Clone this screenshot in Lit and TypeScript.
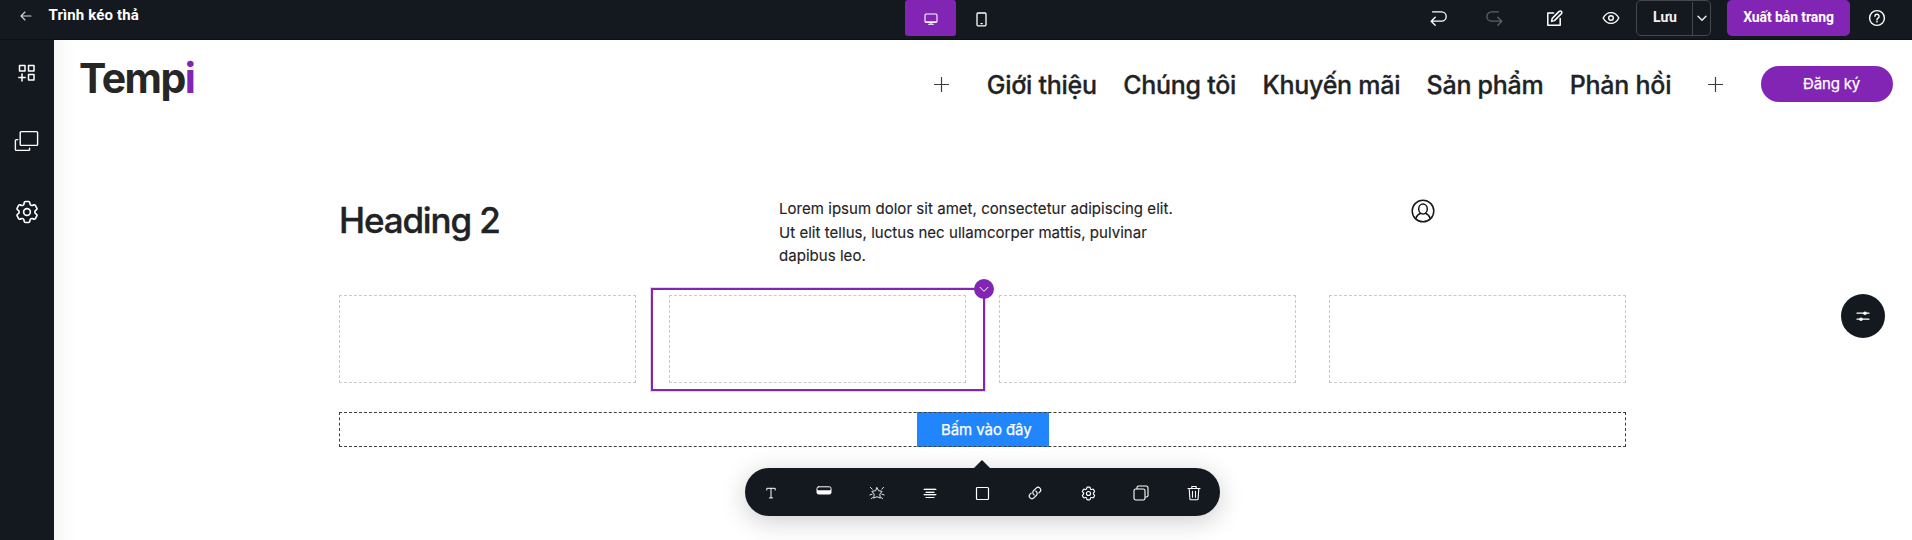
import { LitElement, html, css, svg } from "lit";
import { customElement, property } from "lit/decorators.js";

const gearPath =
  "M9.594 3.94c.09-.542.56-.94 1.11-.94h2.593c.55 0 1.02.398 1.11.94l.213 1.281c.063.374.313.686.645.87.074.04.147.083.22.127.325.196.72.257 1.075.124l1.217-.456a1.125 1.125 0 0 1 1.37.49l1.296 2.247a1.125 1.125 0 0 1-.26 1.431l-1.003.827c-.293.241-.438.613-.43.992a7.723 7.723 0 0 1 0 .255c-.008.378.137.75.43.991l1.004.827c.424.35.534.955.26 1.43l-1.298 2.247a1.125 1.125 0 0 1-1.369.491l-1.217-.456c-.355-.133-.75-.072-1.076.124a6.47 6.47 0 0 1-.22.128c-.331.183-.581.495-.644.869l-.213 1.281c-.09.543-.56.94-1.11.94h-2.594c-.55 0-1.019-.398-1.11-.94l-.213-1.281c-.062-.374-.312-.686-.644-.87a6.52 6.52 0 0 1-.22-.127c-.325-.196-.72-.257-1.076-.124l-1.217.456a1.125 1.125 0 0 1-1.369-.49l-1.297-2.247a1.125 1.125 0 0 1 .26-1.431l1.004-.827c.292-.24.437-.613.43-.991a6.932 6.932 0 0 1 0-.255c.007-.38-.138-.751-.43-.992l-1.004-.827a1.125 1.125 0 0 1-.26-1.43l1.297-2.247a1.125 1.125 0 0 1 1.37-.491l1.216.456c.356.133.751.072 1.076-.124.072-.044.146-.086.22-.128.332-.183.582-.495.644-.869l.214-1.28Z";

type Icon = { w: number; h: number; box?: string; sw?: number; body: unknown };

const icons: Record<string, Icon> = {
  back: { w: 12, h: 10, sw: 1.1, body: svg`<path d="M11 5H1M5 1 1 5l4 4"/>` },
  desktop: {
    w: 14, h: 12, sw: 1.1,
    body: svg`<rect x="1" y="1" width="12" height="8.4" rx="1.2"/><path d="M1.5 8.6h11" opacity=".6"/><path d="M7 9.4v1.6M4.6 11.2h4.8"/>`,
  },
  phone: {
    w: 11, h: 15, sw: 1.3,
    body: svg`<rect x="1" y="1" width="9" height="12.8" rx="1"/><path d="M5 11.6h1.2"/>`,
  },
  undo: {
    w: 18, h: 16, sw: 1.3,
    body: svg`<path d="M2.5 1.8h9a4.5 4.5 0 0 1 0 9.4H1.4M5.2 7.2l-4 4 4 4"/>`,
  },
  redo: {
    w: 18, h: 16, sw: 1.3,
    body: svg`<path d="M13.5 1.8H6.6a4.7 4.7 0 0 0 0 9.4h10M12.8 7.2l4 4-4 4"/>`,
  },
  edit: {
    w: 18, h: 18, sw: 1.5,
    body: svg`<path d="M8.6 4H2.8v12.2h12.4V9.6"/><path d="M6.6 12.4l.6-3 7-7a1.5 1.5 0 0 1 2.2 0 1.5 1.5 0 0 1 0 2.2l-6.9 7Z"/>`,
  },
  eye: {
    w: 18, h: 14, sw: 1.4,
    body: svg`<path d="M1.2 7C3 3.5 5.7 1.6 9 1.6S15 3.5 16.8 7C15 10.5 12.3 12.4 9 12.4S3 10.5 1.2 7Z"/><circle cx="9" cy="7" r="2.3"/>`,
  },
  chevron: { w: 10, h: 7, sw: 1.4, body: svg`<path d="M1 1.3l4 4 4-4"/>` },
  chevronThin: { w: 10, h: 7, sw: 1, body: svg`<path d="M1 1.3l4 4 4-4"/>` },
  help: {
    w: 18, h: 18, sw: 1.4,
    body: svg`<circle cx="9" cy="9" r="7.4"/><path d="M6.9 7.3a2.1 2.1 0 1 1 3.1 1.9c-.7.4-1 .7-1 1.4"/><circle cx="9" cy="12.6" r=".3"/>`,
  },
  widgets: {
    w: 18, h: 18, sw: 1.5,
    body: svg`<rect x="1.5" y="1.500" width="5.5" height="5.5"/><rect x="10.5" y="1.5" width="5.5" height="5.5"/><rect x="10.5" y="10.5" width="5.5" height="5.5"/><path d="M4 10v7M.8 13.5h6.4"/>`,
  },
  layers: {
    w: 25, h: 22, sw: 1.4,
    body: svg`<rect x="6.200" y="1.6" width="17.4" height="13.8" rx="1"/><path d="M3.8 9.6H2.4a1 1 0 0 0-1 1v8.8a1 1 0 0 0 1 1h12.4a.8.8 0 0 0 .8-.8v-1.4"/>`,
  },
  gear: {
    w: 28, h: 28, box: "0 0 24 24", sw: 1.4,
    body: svg`<path d=${gearPath}/><circle cx="12" cy="12" r="2.9"/>`,
  },
  gearSmall: {
    w: 17, h: 17, box: "0 0 24 24", sw: 1.6,
    body: svg`<path d=${gearPath}/><circle cx="12" cy="12" r="2.9"/>`,
  },
  plus: { w: 15, h: 15, sw: 1.2, body: svg`<path d="M7.5.5v14M.5 7.5h14"/>` },
  person: {
    w: 24, h: 24, sw: 1.5,
    body: svg`<circle cx="12" cy="12" r="10.8"/><ellipse cx="12" cy="10" rx="4.3" ry="5"/><path d="M4.8 19.6c.9-3.2 2.6-4.6 4.9-5.4M19.2 19.6c-.9-3.2-2.6-4.6-4.9-5.4"/>`,
  },
  text: {
    w: 10, h: 12, sw: 1,
    body: svg`<path d="M.8 3V1.3h8.4V3M5 1.3v9.4M3.5 10.9h3"/>`,
  },
  button: {
    w: 16, h: 9, sw: 1,
    body: svg`<rect x="1" y=".8" width="14" height="7.2" rx="1.5"/><path class="solid" d="M1 4.2h14v2.6a1.200 1.2 0 0 1-1.2 1.2H2.2A1.2 1.2 0 0 1 1 6.8Z"/>`,
  },
  star: {
    w: 16, h: 14, sw: 0.9,
    body: svg`<path d="M8 1.7l1.6 3 3.500.7-2.3 2.700.5 4L8 10.700l-3.300 1.400.5-4-2.300-2.700 3.500-.7Z"/><path d="M1.400 1.400l1.800 1.700M14.600 1.400l-1.800 1.700M.9 8.900l2.200-.7M15.100 8.900l-2.200-.7M2.400 12.600l1.200-.9M13.600 12.600l-1.200-.9"/>`,
  },
  align: {
    w: 14, h: 12, sw: 1,
    body: svg`<path d="M1 2.5h12M3 5.5h8M1 7.5h12M3 10.5h8"/><path d="M1.5 1.5h11M3 4.5h8M1.5 8.5h11" opacity=".35"/>`,
  },
  square: { w: 15, h: 15, sw: 1.2, body: svg`<rect x="1.5" y="1.5" width="12" height="12" rx="1"/>` },
  link: {
    w: 14, h: 14, box: "0 0 24 24", sw: 2,
    body: svg`<path d="M13.19 8.688a4.5 4.5 0 0 1 1.242 7.244l-4.5 4.5a4.5 4.5 0 0 1-6.364-6.364l1.757-1.757m13.35-.622 1.757-1.757a4.5 4.5 0 0 0-6.364-6.364l-4.5 4.5a4.5 4.5 0 0 0 1.242 7.244"/>`,
  },
  copy: {
    w: 16, h: 16, sw: 1.1,
    body: svg`<rect x="1" y="4" width="11" height="11" rx="1.8"/><path d="M4 3.4V2.6A1.6 1.6 0 0 1 5.6 1h7.600A1.8 1.8 0 0 1 15 2.8v7.6a1.6 1.6 0 0 1-1.6 1.6h-.8"/>`,
  },
  trash: {
    w: 14, h: 16, sw: 1.1,
    body: svg`<path d="M1 3.500h12M4.800 3.300V1.500h4.400v1.800M2.200 3.700l.7 10.200a.9.9 0 0 0 .9.800h6.400a.9.9 0 0 0 .9-.8l.7-10.200M5.500 6.200v6M8.500 6.200v6"/>`,
  },
  sliders: {
    w: 14, h: 12, sw: 1.2,
    body: svg`<path d="M1 3.2h12M1 9.2h12"/><circle class="solid" cx="9" cy="3.2" r="1.8"/><circle class="solid" cx="5" cy="9.2" r="1.8"/>`,
  },
};

@customElement("ui-icon")
class UiIcon extends LitElement {
  @property() name = "";
  static styles = css`
    :host { display: inline-flex; flex: none; }
    svg { display: block; fill: none; stroke: currentColor; stroke-linecap: round; stroke-linejoin: round; }
    .solid { fill: currentColor; stroke: none; }
  `;
  render() {
    const i = icons[this.name];
    return html`<svg width=${i.w} height=${i.h} viewBox=${i.box ?? `0 0 ${i.w} ${i.h}`} stroke-width=${i.sw ?? 1}>${i.body}</svg>`;
  }
}

@customElement("app-root")
class AppRoot extends LitElement {
  static styles = css`
    :host {
      display: flex; flex-direction: column; height: 540px; overflow: hidden;
      background: #fff; color: #1f2326; font-family: Inter, "Noto Sans", sans-serif;
    }
    * { box-sizing: border-box; }
    .topbar {
      display: flex; height: 40px; flex: none; background: #14191f; color: #fff;
      border-bottom: 1px solid #0e1217; font-family: Roboto, sans-serif;
    }
    .left { display: flex; width: 905px; padding-left: 19.500px; gap: 17px; }
    .left ui-icon { margin-top: 11px; color: #d4d6d8; }
    .title { font-size: 15px; font-weight: 700; line-height: 31px; letter-spacing: 0.14px; }
    .tab { display: flex; width: 51px; height: 36px; align-items: center; justify-content: center; border-radius: 3px; padding-top: 2px; }
    .tab.on { background: #8225b5; }
    .right { display: flex; height: 36px; align-items: center; margin-left: auto; padding-right: 26px; }
    .undo { margin-right: 37px; }
    .redo { margin-right: 42px; color: #5d6166; }
    .edit { margin-right: 39px; }
    .eye { margin-right: 16px; }
    .save {
      display: flex; width: 75px; height: 36px; border: 1px solid #45494e; border-radius: 5px;
      margin-right: 16px; font-size: 14px; font-weight: 700; line-height: 33px; color: #f2f2f2;
    }
    .save .label { width: 55px; padding-left: 16px; }
    .save .more { display: flex; flex: 1; align-items: center; justify-content: center; border-left: 1px solid #45494e; margin-top: 1px; }
    .publish {
      width: 123px; height: 36px; border-radius: 5px; background: #8225b5; margin-right: 18px;
      font-size: 14px; font-weight: 700; line-height: 34px; text-align: center; letter-spacing: -0.1px;
    }
    .body { display: flex; flex: 1; min-height: 0; }
    .side {
      display: flex; flex-direction: column; align-items: center; width: 54px; flex: none;
      background: #14191f; color: #fff; padding: 24px 1px 0 0;
    }
    .side .layers { margin-top: 48px; }
    .side .gear { margin-top: 46px; }
    .canvas {
      position: relative; flex: 1; min-width: 0;
      background: linear-gradient(90deg, #f5f5f6 0, #fafafa 8px, #fff 22px);
    }
    .header { display: flex; align-items: center; height: 89px; padding: 0 19px 0 25px; }
    .logo { font-size: 41px; font-weight: 700; letter-spacing: -1.500px; line-height: 48px; margin-bottom: 13px; color: #262626; }
    .logo .accent { color: #8225b5; }
    .nav {
      display: flex; align-items: center; margin-left: auto; gap: 26.3px; font-size: 25px; font-weight: 500;
      letter-spacing: -0.25px; white-space: nowrap; -webkit-text-stroke: 0.3px currentColor;
    }
    .nav .first { margin-right: 11.5px; }
    .nav .last { margin-left: 10.5px; }
    .nav ui-icon { color: #3a3e41; }
    .signup {
      width: 132px; height: 36px; margin: 0 0 1px 38px; padding-left: 42px; border-radius: 18px;
      background: #8225b5; color: #fff; font-size: 15px; line-height: 35px; letter-spacing: -0.15px;
      -webkit-text-stroke: 0.25px currentColor;
    }
    .section { width: 1287px; margin: 68px 0 0 285px; }
    .intro { display: grid; grid-template-columns: repeat(3, 407px); gap: 33px; height: 98px; align-items: start; }
    h2 { margin: 0; font-size: 35px; font-weight: 500; line-height: 47px; letter-spacing: -1.15px; -webkit-text-stroke: 0.4px currentColor; }
    p { margin: 0; width: 400px; font-size: 15px; line-height: 23.5px; letter-spacing: 0.04px; color: #1f2326; -webkit-text-stroke: 0.15px currentColor; }
    .intro ui-icon { justify-self: center; margin-top: 2px; color: #16191c; }
    .cells { display: grid; grid-template-columns: repeat(4, 297px); gap: 33px; }
    .cell { position: relative; height: 88px; border: 1px dashed #c9c9c9; }
    .selection {
      position: absolute; inset: -8px -20px -9px -19px; border: 2px solid #8225b5;
      box-shadow: 0 0 0 1px #8225b533;
    }
    .badge {
      position: absolute; top: -11px; right: -11px; width: 20px; height: 20px; border-radius: 50%;
      display: flex; align-items: center; justify-content: center; background: #8225b5; color: #fff;
    }
    .cta-row { position: relative; display: flex; justify-content: center; height: 35px; margin-top: 29px; }
    .cta-row::after { content: ""; position: absolute; inset: 0; border: 1px dashed #3e3e3e; }
    .cta {
      width: 132px; height: 35px; padding-left: 24.500px; background: #2186fd; color: #fff; font-size: 15px;
      line-height: 35px; letter-spacing: -0.08px; -webkit-text-stroke: 0.25px currentColor;
    }
    .float {
      position: absolute; right: 27px; top: 254px; width: 44px; height: 44px; border-radius: 50%;
      display: flex; align-items: center; justify-content: center; background: #14191f; color: #fff;
    }
    .tools {
      position: absolute; left: 691px; top: 428px; width: 475px; height: 48px; border-radius: 24px;
      display: grid; grid-template-columns: repeat(9, 1fr); place-items: center;
      background: #14191f; color: #fff; padding-top: 2px; box-shadow: 0 5px 26px rgba(0, 0, 0, 0.2);
    }
    .tools::before {
      content: ""; position: absolute; left: 229px; top: -8px;
      border: 8px solid transparent; border-top: 0; border-bottom-color: #14191f;
    }
    .tools .raised { margin-bottom: 6px; }
  `;

  render() {
    const links = ["Giới thiệu", "Chúng tôi", "Khuyến mãi", "Sản phẩm", "Phản hồi"];
    const tools = ["text", "button", "star", "align", "square", "link", "gearSmall", "copy", "trash"];
    return html`
      <div class="topbar">
        <div class="left"><ui-icon name="back"></ui-icon><span class="title">Trình kéo thả</span></div>
        <div class="tab on"><ui-icon name="desktop"></ui-icon></div>
        <div class="tab"><ui-icon name="phone"></ui-icon></div>
        <div class="right">
          <ui-icon class="undo" name="undo"></ui-icon>
          <ui-icon class="redo" name="redo"></ui-icon>
          <ui-icon class="edit" name="edit"></ui-icon>
          <ui-icon class="eye" name="eye"></ui-icon>
          <div class="save"><span class="label">Lưu</span><span class="more"><ui-icon name="chevron"></ui-icon></span></div>
          <div class="publish">Xuất bản trang</div>
          <ui-icon name="help"></ui-icon>
        </div>
      </div>
      <div class="body">
        <div class="side">
          <ui-icon name="widgets"></ui-icon>
          <ui-icon class="layers" name="layers"></ui-icon>
          <ui-icon class="gear" name="gear"></ui-icon>
        </div>
        <div class="canvas">
          <div class="header">
            <div class="logo">Temp<span class="accent">i</span></div>
            <nav class="nav">
              <ui-icon class="first" name="plus"></ui-icon>
              ${links.map((l) => html`<span>${l}</span>`)}
              <ui-icon class="last" name="plus"></ui-icon>
            </nav>
            <div class="signup">Đăng ký</div>
          </div>
          <div class="section">
            <div class="intro">
              <h2>Heading 2</h2>
              <p>Lorem ipsum dolor sit amet, consectetur adipiscing elit. Ut elit tellus, luctus nec ullamcorper mattis, pulvinar dapibus leo.</p>
              <ui-icon name="person"></ui-icon>
            </div>
            <div class="cells">
              <div class="cell"></div>
              <div class="cell">
                <div class="selection"><span class="badge"><ui-icon name="chevronThin"></ui-icon></span></div>
              </div>
              <div class="cell"></div>
              <div class="cell"></div>
            </div>
            <div class="cta-row"><div class="cta">Bấm vào đây</div></div>
          </div>
          <div class="float"><ui-icon name="sliders"></ui-icon></div>
          <div class="tools">
            ${tools.map((t) => html`<ui-icon class=${t === "button" ? "raised" : ""} name=${t}></ui-icon>`)}
          </div>
        </div>
      </div>
    `;
  }
}
